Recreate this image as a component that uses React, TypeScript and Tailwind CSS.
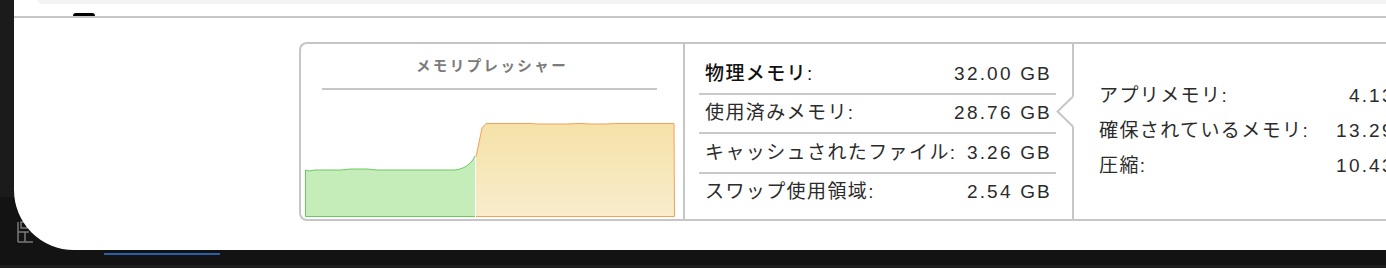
import React from 'react'

const FONT = '"Liberation Sans", "Noto Sans CJK JP", sans-serif'

const usage = [
  { label: '物理メモリ:', value: '32.00 GB', strong: true },
  { label: '使用済みメモリ:', value: '28.76 GB' },
  { label: 'キャッシュされたファイル:', value: '3.26 GB' },
  { label: 'スワップ使用領域:', value: '2.54 GB' },
]

const breakdown = [
  { label: 'アプリメモリ:', value: '4.13 GB' },
  { label: '確保されているメモリ:', value: '13.29 GB' },
  { label: '圧縮:', value: '10.43 GB' },
]

// memory pressure graph (green = normal, yellow = warning)
function PressureChart() {
  const greenTop =
    'M0.5,49 L4,50 L10,49 L36,49 L46,48 L62,48 L72,49 L150,49 C158,48 166,44 170,35'
  const yellowTop =
    'M171,36 L177,7 L181,2.5 L225,2.5 L232,3 L260,3 L275,2.5 L285,3 L300,3 L312,2.5 L369,2.5'
  return (
    <svg width="370" height="96" viewBox="0 0 370 96" className="block">
      <defs>
        <linearGradient id="yel" x1="0" y1="0" x2="0" y2="1">
          <stop offset="0" stopColor="#f5e2a8" />
          <stop offset="1" stopColor="#f8eccb" />
        </linearGradient>
      </defs>
      <path d={`${greenTop} L170,95.5 L0.5,95.5 Z`} fill="#c4edb9" />
      <path d={`M0.5,95.5 L0.5,49 ${greenTop.slice(8)}`} fill="none" stroke="#6ec862" strokeWidth="1" />
      <path d="M0.5,95.5 L170,95.5" stroke="#6ec862" strokeWidth="1" />
      <path d={`${yellowTop} L369,95.5 L171,95.5 Z`} fill="url(#yel)" />
      <path d={`${yellowTop} L369.5,95.5 L171,95.5`} fill="none" stroke="#f0a258" strokeWidth="1" />
    </svg>
  )
}

export default function App() {
  return (
    <div
      className="relative w-[1386px] h-[268px] overflow-hidden bg-[#131313] flex flex-col"
      style={{ fontFamily: FONT }}
    >
      {/* dock glyph peeking out behind the window corner */}
      <svg className="absolute left-[17px] top-[220px]" width="18" height="24" viewBox="0 0 18 24">
        <path d="M1,2 L1,22 M1,22 L16,22 M1,12 L12,12 M4,2 L10,2 L10,8 L4,8 Z M8,12 L8,22" stroke="#7a7a7a" strokeWidth="1.5" fill="none" />
      </svg>

      <div className="flex h-[250px]">
        <div className="shrink-0 w-[14px] h-[197px] bg-[#1b1b1b]" />

        {/* window */}
        <div className="relative z-10 flex-1 min-w-0 bg-white rounded-bl-[60px] flex flex-col">
          <div className="h-[4px] ml-[24px] bg-[#f2f3f3] rounded-bl-[10px]" />
          <div className="h-[12px] flex items-end pl-[59px]">
            <div className="w-[22px] h-[3px] rounded-t-full bg-black" />
          </div>
          <div className="h-[2px] bg-[#c8c8c8]" />

          {/* memory panel */}
          <div className="mt-[24px] ml-[285px] h-[179px] border-2 border-r-0 border-[#c6c6c6] rounded-l-[8px] flex">
            {/* pressure */}
            <div className="shrink-0 w-[382px] flex flex-col">
              <div className="pt-[12px] h-[32px] text-center text-[14.5px] leading-[20px] font-bold tracking-[2.4px] text-[#7b7b7b]">
                メモリプレッシャー
              </div>
              <div className="mt-[12px] ml-[21px] w-[335px] h-[2px] bg-[#c6c6c6]" />
              <div className="mt-[31px] ml-[4px]">
                <PressureChart />
              </div>
            </div>

            <div className="shrink-0 w-[2px] bg-[#c6c6c6]" />

            {/* usage */}
            <div className="shrink-0 w-[387px] pl-[14px] pr-[16px] pt-[11px]">
              {usage.map((row, i) => (
                <div key={row.label}>
                  {i > 0 && <div className="h-[2px] bg-[#c9c9c9]" />}
                  <div className="h-[37.5px] px-[6px] flex items-center justify-between text-[19px] text-[#2b2b2b]">
                    <span className={row.strong ? 'tracking-[1.4px] font-medium text-[#111]' : 'tracking-[1.4px]'}>
                      {row.label}
                    </span>
                    <span className="tracking-[2.2px] mr-[-2px]">{row.value}</span>
                  </div>
                </div>
              ))}
            </div>

            {/* breakdown */}
            <div className="relative flex-1 min-w-0 border-l-2 border-[#c6c6c6] pl-[25px] pt-[35px]">
              <svg className="absolute left-[-18px] top-[52px]" width="20" height="32" viewBox="0 0 20 32">
                <path d="M18,0 L2,15.5 L18,31 Z" fill="#ffffff" />
                <path d="M17,0.5 L1.5,15.5 L17,30.5" fill="none" stroke="#c6c6c6" strokeWidth="2" />
              </svg>
              {breakdown.map((row) => (
                <div
                  key={row.label}
                  className="w-[333px] h-[35px] flex items-center justify-between text-[19px] text-[#2b2b2b]"
                >
                  <span className="tracking-[1.4px]">{row.label}</span>
                  <span className="tracking-[2.2px] mr-[-2px]">{row.value}</span>
                </div>
              ))}
            </div>
          </div>
        </div>
      </div>

      {/* dock strip */}
      <div className="h-[15px] pl-[104px] pt-[3px]">
        <div className="w-[116px] h-[2px] bg-[#2c5fa8]" />
      </div>
      <div className="h-[3px] bg-[#1e1e1e]" />
    </div>
  )
}
